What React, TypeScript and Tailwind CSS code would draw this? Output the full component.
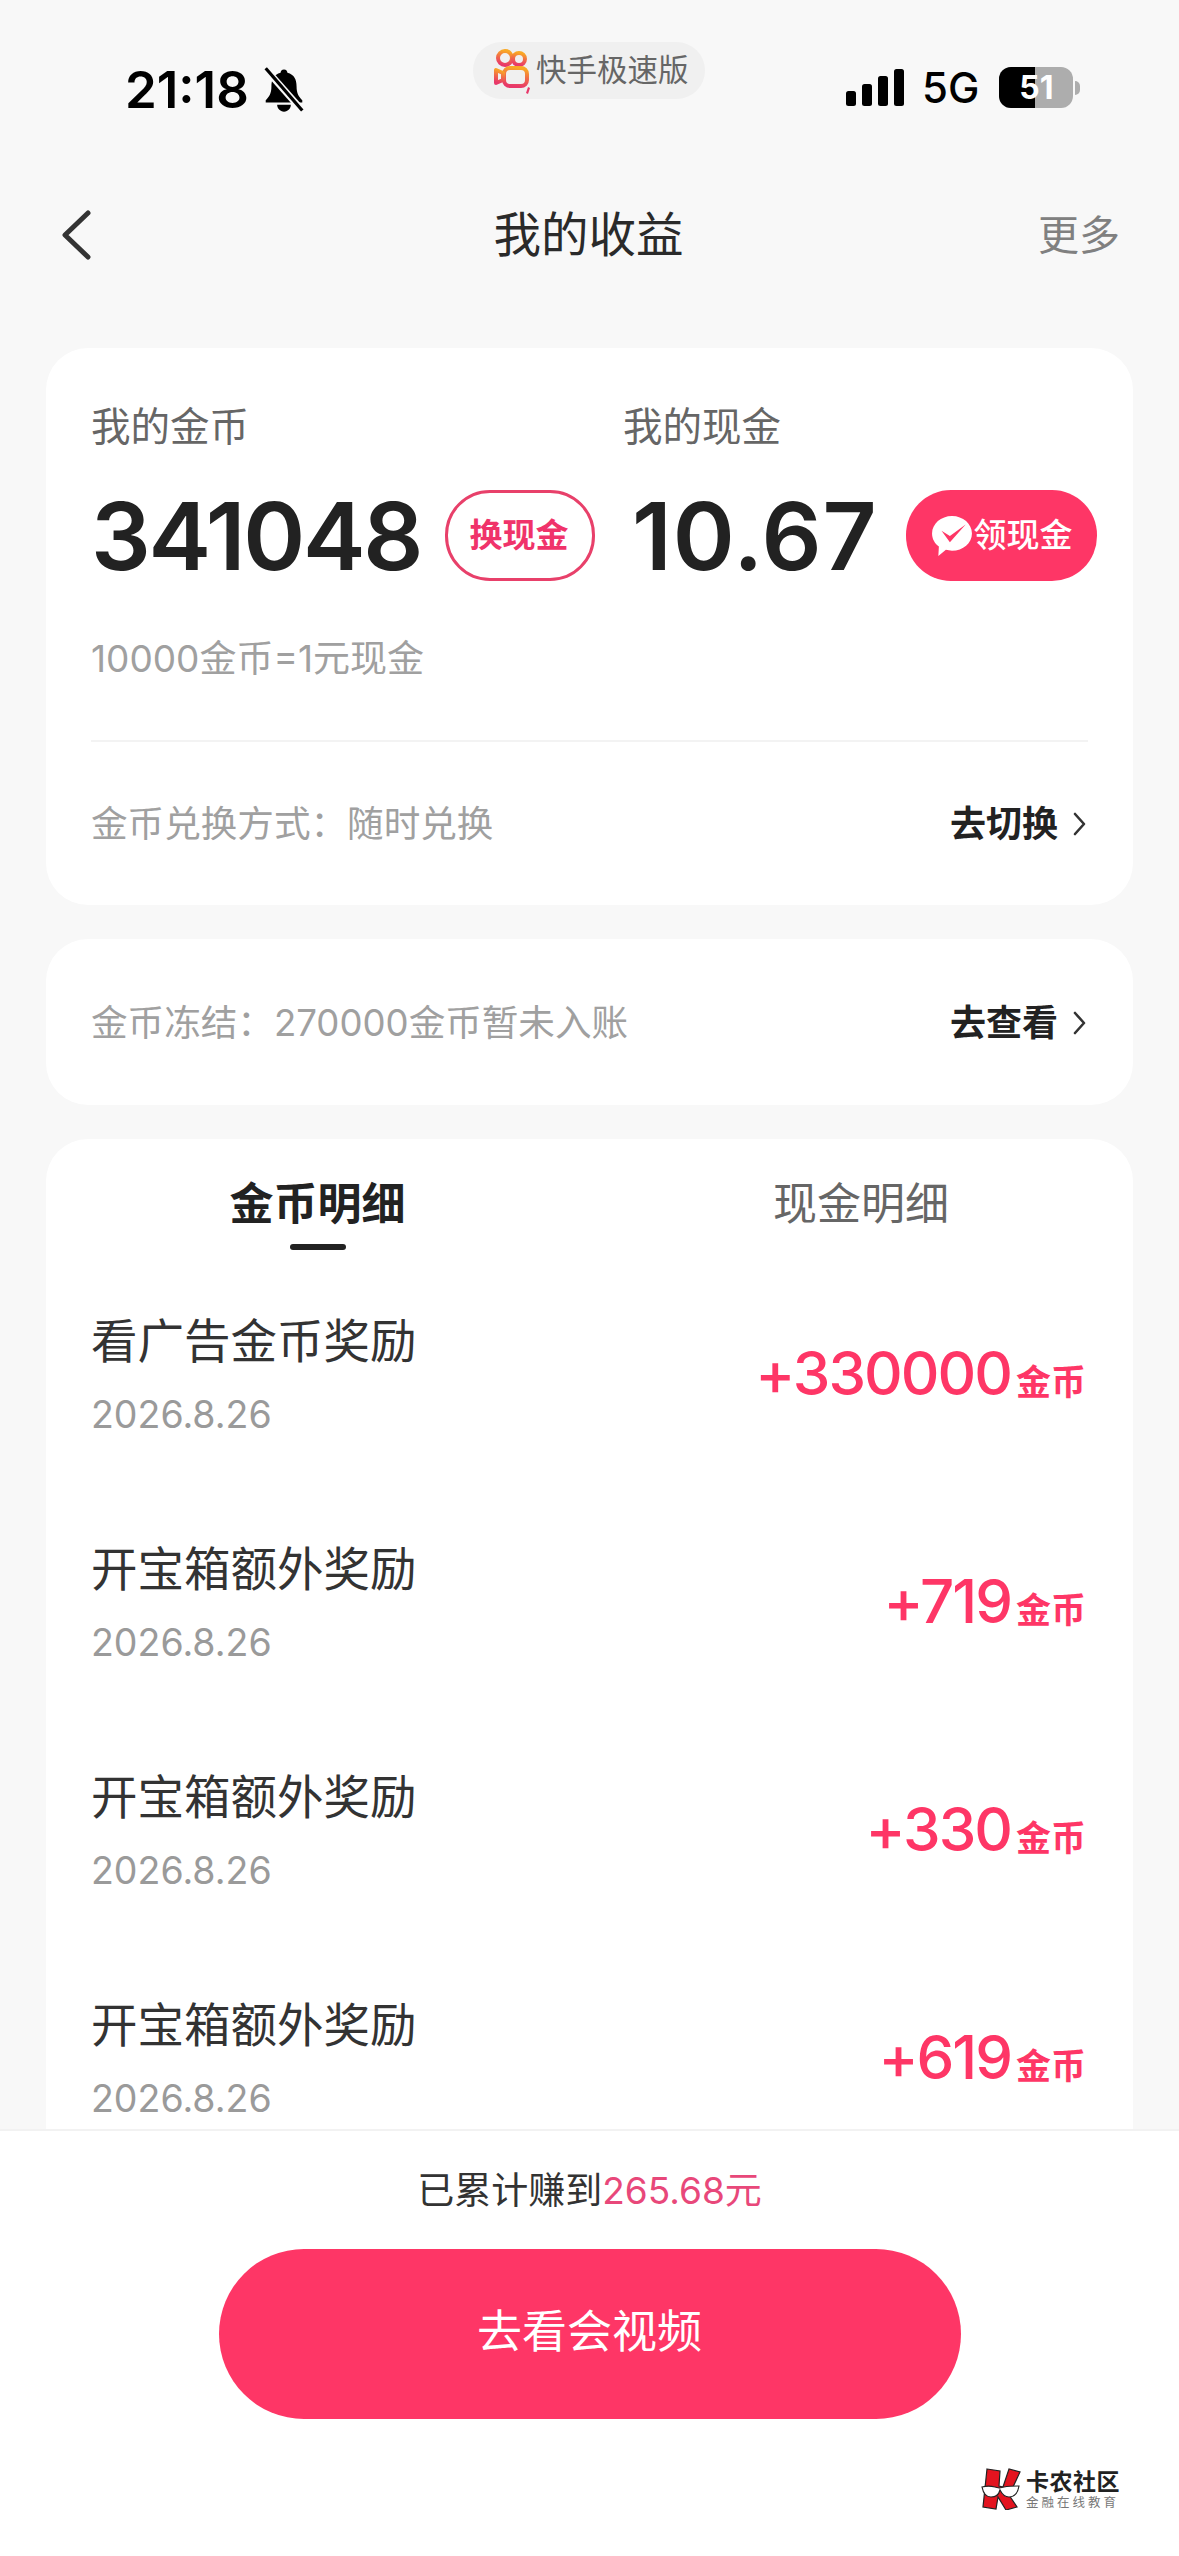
const sans = "font-['Inter','Noto_Sans_CJK_SC',sans-serif]";

const rows = [
  { title: "看广告金币奖励", amount: "+330000" },
  { title: "开宝箱额外奖励", amount: "+719" },
  { title: "开宝箱额外奖励", amount: "+330" },
  { title: "开宝箱额外奖励", amount: "+619" },
];

function Chevron() {
  return (
    <svg width="14" height="26" viewBox="0 0 14 26" fill="none" className="ml-[15px]">
      <path d="M2 3l9 10-9 10" stroke="#333" strokeWidth="2.6" strokeLinecap="round" strokeLinejoin="round" />
    </svg>
  );
}

function KwaiLogo() {
  return (
    <svg width="38" height="48" viewBox="0 0 38 48" fill="none">
      <defs>
        <linearGradient id="kw" x1="0.6" y1="0" x2="0.4" y2="1">
          <stop offset="0" stopColor="#f9a825" />
          <stop offset="0.5" stopColor="#f0694a" />
          <stop offset="1" stopColor="#e8386a" />
        </linearGradient>
      </defs>
      <g stroke="url(#kw)" strokeWidth="4">
        <circle cx="12" cy="11" r="7" />
        <circle cx="26" cy="12" r="6" />
        <rect x="11" y="21" width="23" height="18" rx="6" />
        <path d="M10 26l-7-3v13l7-3z" strokeLinejoin="round" />
      </g>
      <path d="M35 40l2 1-2 6-2-1z" fill="#e8386a" />
    </svg>
  );
}

function Bell() {
  return (
    <svg width="48" height="48" viewBox="0 0 42 42" className="ml-[11px]">
      <path d="M21 3c2 0 3 1.500 3 3 6 1.500 8 6 8 12 0 6 2 9 5 12v2H5v-2c3-3 5-6 5-12 0-6 2-10.500 8-12 0-1.500 1-3 3-3z" fill="#000" />
      <path d="M15 34h12c0 3-2.500 6-6 6s-6-3-6-6z" fill="#000" />
      <path d="M6 4l31 35" stroke="#f8f8f8" strokeWidth="6" />
      <path d="M5 2l32 37" stroke="#000" strokeWidth="2.800" />
    </svg>
  );
}

function Signal() {
  return (
    <div className="flex h-[37px] items-end gap-[6px]">
      <div className="h-[15px] w-[10px] rounded-[2.500px] bg-black" />
      <div className="h-[22px] w-[10px] rounded-[2.500px] bg-black" />
      <div className="h-[30px] w-[10px] rounded-[2.500px] bg-black" />
      <div className="h-[37px] w-[10px] rounded-[2.500px] bg-black" />
    </div>
  );
}

function Battery() {
  return (
    <div className="flex items-center">
      <div className="relative flex h-[41px] w-[74px] overflow-hidden rounded-[12px] bg-[#adadad]">
        <div className="w-[36px] bg-black" />
        <div className="absolute inset-0 flex items-center justify-center text-[32px] font-bold text-white">51</div>
      </div>
      <div className="ml-[2px] h-[14px] w-[5px] rounded-r-full bg-[#adadad]" />
    </div>
  );
}

function WeChatCheck() {
  return (
    <svg width="42" height="42" viewBox="0 0 40 40" className="shrink-0">
      <path d="M20 1c10.500 0 19 7.500 19 16.500S30.500 34 20 34c-2 0-4-.300-5.800-.800L7 39l.5-9C3.500 27 1 22.500 1 17.500 1 8.500 9.500 1 20 1z" fill="#fff" />
      <path d="M10 15l8 5L33 9 18 26z" fill="#fe3666" />
    </svg>
  );
}

function KLogo() {
  return (
    <svg width="40" height="42" viewBox="0 0 40 42">
      <path d="M6 1l13 2-1 15 4 1L28 1l11 3-7 15-4 8 8 12-11 3-8-13-2 12-13-2z" fill="#e3141f" stroke="#222" strokeWidth="1.200" />
      <path d="M1 19c4-1 9-1 13 0 2 .500 3 1 4 1s3-.500 5-1c5-1 10-1 15-1-1 6-4 11-10 11-5 0-7-3-9-7-1 4-3 7-9 7-5 0-8-5-9-10z" fill="#fff" stroke="#222" strokeWidth="1.200" />
    </svg>
  );
}

export default function App() {
  return (
    <div className={`flex h-[2556px] w-[1179px] flex-col overflow-hidden bg-[#f8f8f8] ${sans}`}>
      {/* status bar */}
      <div className="flex h-[120px] shrink-0 pl-[125px]">
        <div className="flex w-[348px] items-center self-start pt-[66px]">
          <span className="text-[51px] leading-[44px] font-semibold text-black">21:18</span>
          <Bell />
        </div>
        <div className="mt-[42px] flex h-[57px] w-[232px] items-center self-start rounded-full bg-[#f0f0f0] pl-[20px] text-[30.500px] text-[#666]">
          <KwaiLogo />
          <span className="ml-[5px] leading-none whitespace-nowrap">快手极速版</span>
        </div>
        <div className="ml-[141px] flex items-center self-start pt-[67px]">
          <Signal />
          <span className="ml-[18px] mr-[20px] text-[42px] leading-[41px] font-medium text-black">5G</span>
          <Battery />
        </div>
      </div>

      {/* header */}
      <div className="flex h-[228px] shrink-0 items-start justify-between pl-[60px] pr-[59px] pt-[90px]">
        <div className="w-[117px]">
          <svg width="32" height="50" viewBox="0 0 32 50" fill="none">
            <path d="M28 3L5 25l23 22" stroke="#333" strokeWidth="5" strokeLinecap="round" strokeLinejoin="round" />
          </svg>
        </div>
        <div className="text-[47.500px] leading-[50px] text-[#2a2a2a]">我的收益</div>
        <div className="w-[120px] pt-[1px] text-right text-[41px] leading-[48px] text-[#808080]">更多</div>
      </div>

      {/* balance card */}
      <div className="mx-[46px] h-[557px] shrink-0 rounded-[42px] bg-white pl-[45px] pr-[46px] pt-[56px]">
        <div className="flex text-[39.500px] leading-[46px] text-[#666]">
          <div className="w-[532px]">我的金币</div>
          <div>我的现金</div>
        </div>
        <div className="mt-[40px] flex h-[91px] items-center">
          <div className="w-[354px] shrink-0 text-[94px] leading-none font-semibold tracking-[-2.300px] text-[#222]">341048</div>
          <div className="flex h-[91px] w-[150px] shrink-0 items-center justify-center rounded-[45px] border-[3px] border-[#e8406a] pr-[2px] text-[33px] font-bold text-[#f0336a]">换现金</div>
          <div className="ml-[37px] w-[274px] shrink-0 text-[94px] leading-none font-semibold tracking-[1px] text-[#222]">10.67</div>
          <div className="flex h-[91px] w-[191px] shrink-0 items-center justify-center rounded-[45px] bg-[#fe3666] text-[33px] font-medium text-white">
            <WeChatCheck />
            <span className="ml-[1px]">领现金</span>
          </div>
        </div>
        <div className="mt-[55px] text-[37px] leading-[46px] text-[#a0a0a0]">10000金币=1元现金</div>
        <div className="mt-[58px] h-[2px] w-[997px] bg-[#f3f3f3]" />
        <div className="mt-[60px] flex items-center justify-between text-[36.600px] leading-[44px] text-[#a0a0a0]">
          <span>金币兑换方式：随时兑换</span>
          <span className="flex items-center text-[36px] font-bold text-[#222]">
            去切换
            <Chevron />
          </span>
        </div>
      </div>

      {/* frozen coins */}
      <div className="mx-[46px] mt-[34px] flex h-[166px] shrink-0 items-center justify-between rounded-[42px] bg-white pl-[45px] pr-[46px] pt-[2px] text-[36.600px] text-[#a0a0a0]">
        <span>金币冻结：270000金币暂未入账</span>
        <span className="flex items-center text-[36px] font-bold text-[#222]">
          去查看
          <Chevron />
        </span>
      </div>

      {/* details list */}
      <div className="mx-[46px] mt-[34px] min-h-0 flex-1 overflow-hidden rounded-t-[42px] bg-white">
        <div className="flex pt-[38px]">
          <div className="flex w-[543px] flex-col items-center">
            <div className="text-[44px] leading-[54px] font-bold text-[#222]">金币明细</div>
            <div className="mt-[13px] h-[6px] w-[56px] rounded-full bg-[#222]" />
          </div>
          <div className="w-[544px] text-center text-[44px] leading-[54px] text-[#666]">现金明细</div>
        </div>
        <div className="mt-[61px]">
          {rows.map((row, i) => (
            <div key={i} className="flex h-[228px] items-start justify-between pl-[45px] pr-[47px]">
              <div>
                <div className="text-[46.500px] leading-[60px] text-[#333]">{row.title}</div>
                <div className="mt-[22px] text-[37.500px] leading-[44px] text-[#9a9a9a]">2026.8.26</div>
              </div>
              <div className="flex items-baseline pt-[26px] text-[#fe3666]">
                <span className="text-[60px] leading-[72px] font-medium tracking-[-2px]">{row.amount}</span>
                <span className="ml-[5px] text-[35px] font-semibold">金币</span>
              </div>
            </div>
          ))}
        </div>
      </div>

      {/* bottom bar */}
      <div className="relative h-[427px] shrink-0 border-t-2 border-[#f2f2f2] bg-white">
        <div className="pt-[38px] text-center text-[37px] leading-[44px] text-[#333]">
          已累计赚到<span className="text-[#e8487a]">265.68元</span>
        </div>
        <div className="mx-auto mt-[36px] flex h-[170px] w-[742px] items-center justify-center rounded-full bg-[#fe3666] pb-[4px] text-[45px] text-white">
          去看会视频
        </div>
        {/* watermark */}
        <div className="absolute left-[981px] top-[337px] flex items-center">
          <KLogo />
          <div className="ml-[5px]">
            <div className="text-[23px] leading-[26px] font-bold tracking-[0.500px] text-[#222]">卡农社区</div>
            <div className="text-[12.500px] leading-[15px] tracking-[3px] whitespace-nowrap text-[#777]">金融在线教育</div>
          </div>
        </div>
      </div>
    </div>
  );
}
